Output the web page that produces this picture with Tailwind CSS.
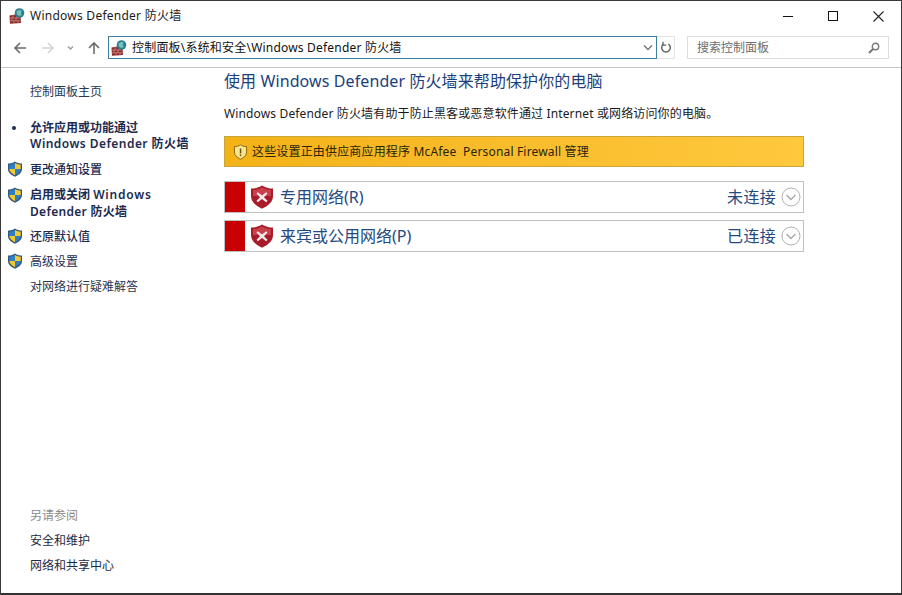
<!DOCTYPE html>
<html lang="zh-CN">
<head>
<meta charset="utf-8">
<script src="https://cdn.jsdelivr.net/npm/@tailwindcss/browser@4"></script>
</head>
<body class="m-0 bg-white">
<svg width="0" height="0" class="absolute">
  <defs>
    <symbol id="fw" viewBox="0 0 16 16">
      <path d="M0.5 7.5 L11.5 5.5 L12 15 L1 15.8 Z" fill="#8e2b2b"/>
      <path d="M1 10 H11.5 M1 12.8 H11.8 M4 7 V10 M8 6.5 V10 M3 10 V12.8 M7 10 V12.8 M5 12.8 V15.5 M9 12.8 V15.5" stroke="#cf9a90" stroke-width=".7" fill="none"/>
      <circle cx="10.5" cy="5" r="4.8" fill="#2f7f90"/>
      <path d="M7.5 3.5 Q10 1 12.8 2.5 Q11 5 12.8 7 Q10 8.8 8 6.5 Z" fill="#72c4bd"/>
    </symbol>
    <symbol id="uac" viewBox="0 0 16 16">
      <path d="M8 .5 C10 2 12.5 2.6 15 2.6 V8 C15 11.5 12 14 8 15.7 C4 14 1 11.5 1 8 V2.6 C3.5 2.6 6 2 8 .5 Z" fill="#33587f"/>
      <path d="M8 2 V8 H2.3 V3.7 C4.3 3.6 6.3 3.1 8 2 Z" fill="#2f7fc4"/>
      <path d="M8 2 C9.7 3.1 11.7 3.6 13.7 3.7 V8 H8 Z" fill="#f4c92f"/>
      <path d="M2.3 8 H8 V14.2 C5 12.8 2.6 10.8 2.3 8 Z" fill="#f4c92f"/>
      <path d="M8 8 H13.7 C13.4 10.8 11 12.8 8 14.2 Z" fill="#2f7fc4"/>
    </symbol>
    <symbol id="red" viewBox="0 0 24 24">
      <path d="M12 .5 C15 2.5 19 3.6 23 3.6 V11 C23 17 18 21 12 23.7 C6 21 1 17 1 11 V3.6 C5 3.6 9 2.5 12 .5 Z" fill="#a81c2a"/>
      <path d="M12 2.5 C15 4.2 18 5 21 5 V11 H3 V5 C6 5 9 4.2 12 2.5 Z" fill="#c8404c"/>
      <path d="M7.8 7.2 L12 10.4 L16.2 7.2 L17.5 8.6 L14 12.2 L17.5 15.8 L16.2 17.2 L12 14 L7.8 17.2 L6.5 15.8 L10 12.2 L6.5 8.6 Z" fill="#f6e9ea"/>
    </symbol>
    <symbol id="chev" viewBox="0 0 20 20">
      <circle cx="10" cy="10" r="9" fill="#fff" stroke="#b3b3b3"/>
      <path d="M5.5 8 L10 12.5 L14.5 8" fill="none" stroke="#a8a8a8" stroke-width="1.4"/>
    </symbol>
  </defs>
</svg>

<div class="w-[902px] h-[595px] overflow-hidden flex flex-col border border-[#3a3a3a] border-b-[2px] border-b-[#333] text-[12px] font-['Noto_Sans','Noto_Sans_CJK_SC',sans-serif] box-border">

  <!-- title bar -->
  <header class="h-[30px] shrink-0 flex items-center">
    <svg class="w-[16px] h-[16px] ml-[8px]"><use href="#fw"/></svg>
    <span class="ml-[5px] text-[#1a1a1a] tracking-[0.25px]">Windows Defender 防火墙</span>
    <div class="ml-auto flex items-center h-full">
      <button class="w-[44px] h-full flex items-center justify-center">
        <svg width="10" height="10" viewBox="0 0 10 10"><path d="M0 5.5H10" stroke="#111" stroke-width="1"/></svg>
      </button>
      <button class="w-[45px] h-full flex items-center justify-center">
        <svg width="10" height="10" viewBox="0 0 10 10"><rect x=".5" y=".5" width="9" height="9" fill="none" stroke="#111"/></svg>
      </button>
      <button class="w-[46px] h-full flex items-center justify-center">
        <svg width="11" height="11" viewBox="0 0 11 11"><path d="M.5 .5L10.5 10.5M10.5 .5L.5 10.5" stroke="#222" stroke-width="1.1"/></svg>
      </button>
    </div>
  </header>

  <!-- navigation row -->
  <nav class="h-[37px] shrink-0 flex items-center border-b border-[#c4c4c4] pb-[3px]">
    <svg class="ml-[12px] w-[14px] h-[14px]" viewBox="0 0 14 14"><path d="M13 7H2M7 2L2 7L7 12" fill="none" stroke="#6b6b6b" stroke-width="1.6"/></svg>
    <svg class="ml-[14px] w-[14px] h-[14px]" viewBox="0 0 14 14"><path d="M1 7H12M7 2L12 7L7 12" fill="none" stroke="#d4d4d4" stroke-width="1.6"/></svg>
    <svg class="ml-[12px] w-[7px] h-[6px]" viewBox="0 0 7 6"><path d="M1 1.5L3.5 4L6 1.5" fill="none" stroke="#9a9a9a" stroke-width="1.3"/></svg>
    <svg class="ml-[13px] w-[14px] h-[14px]" viewBox="0 0 14 14"><path d="M7 13V2M2 7L7 2L12 7" fill="none" stroke="#6b6b6b" stroke-width="1.6"/></svg>
    <div class="ml-[7px] w-[549px] h-[23px] border border-[#3f7f9e] flex items-center">
      <svg class="w-[16px] h-[16px] ml-[2px]"><use href="#fw"/></svg>
      <span class="ml-[5px] text-[#111] tracking-[0.2px]">控制面板\系统和安全\Windows Defender 防火墙</span>
      <svg class="ml-auto mr-[3px] w-[10px] h-[7px]" viewBox="0 0 10 7"><path d="M1 1.5L5 5.5L9 1.5" fill="none" stroke="#777" stroke-width="1.4"/></svg>
    </div>
    <div class="w-[18px] h-[23px] border border-l-0 border-[#e4e4e4] flex items-center justify-center">
      <svg width="12" height="13" viewBox="0 0 12 13"><path d="M8.5 3.2A4.3 4.3 0 1 1 3.5 3.2" fill="none" stroke="#666" stroke-width="1.5"/><path d="M3 .8V4.2H6.2" fill="none" stroke="#666" stroke-width="1.3"/></svg>
    </div>
    <div class="ml-[12px] w-[202px] h-[23px] border border-[#dedede] flex items-center pl-[9px] pr-[8px]">
      <span class="text-[#6d6d6d]">搜索控制面板</span>
      <svg class="ml-auto" width="12" height="12" viewBox="0 0 12 12"><circle cx="7.5" cy="4.5" r="3.2" fill="none" stroke="#777" stroke-width="1.4"/><path d="M5 7L1 11" stroke="#777" stroke-width="2"/></svg>
    </div>
  </nav>

  <div class="flex-1 flex min-h-0">
    <!-- sidebar -->
    <aside class="w-[223px] shrink-0 flex flex-col text-[#1c2b50] pb-[17px]">
      <a class="ml-[29px] mt-[14px] leading-[20px] text-[#2a3650]">控制面板主页</a>
      <div class="mt-[18px] relative pl-[29px] font-semibold leading-[16px]">
        <span class="absolute left-[11px] top-[6px] w-[4px] h-[4px] rounded-full bg-[#1c2b50]"></span>
        允许应用或功能通过<br><span class="tracking-[0.45px]">Windows Defender 防火墙</span>
      </div>
      <div class="mt-[8px] flex items-start h-[20px] leading-[20px]">
        <svg class="w-[16px] h-[16px] ml-[6px] mt-[1px]"><use href="#uac"/></svg>
        <span class="ml-[7px] font-medium">更改通知设置</span>
      </div>
      <div class="mt-[6px] flex items-start leading-[17px]">
        <svg class="w-[16px] h-[16px] ml-[6px] mt-[1px] shrink-0"><use href="#uac"/></svg>
        <span class="ml-[7px] font-semibold">启用或关闭 <span class="tracking-[0.8px]">Windows</span><br><span class="tracking-[0.3px]">Defender 防火墙</span></span>
      </div>
      <div class="mt-[7px] flex items-start h-[20px] leading-[20px]">
        <svg class="w-[16px] h-[16px] ml-[6px] mt-[1px]"><use href="#uac"/></svg>
        <span class="ml-[7px] font-medium">还原默认值</span>
      </div>
      <div class="mt-[5px] flex items-start h-[20px] leading-[20px]">
        <svg class="w-[16px] h-[16px] ml-[6px] mt-[1px]"><use href="#uac"/></svg>
        <span class="ml-[7px]">高级设置</span>
      </div>
      <a class="ml-[29px] mt-[5px] leading-[20px] text-[#2a3650]">对网络进行疑难解答</a>
      <div class="mt-auto ml-[29px] flex flex-col gap-[5px] leading-[20px]">
        <span class="text-[#8a8a8a]">另请参阅</span>
        <a class="text-[#1e2a3e]">安全和维护</a>
        <a class="text-[#1e2a3e]">网络和共享中心</a>
      </div>
    </aside>

    <!-- main -->
    <main class="w-[580px] shrink-0 flex flex-col">
      <h1 class="text-[16px] leading-[24px] mt-[1px] text-[#1c3f7c] font-normal tracking-[0.1px]">使用 Windows Defender 防火墙来帮助保护你的电脑</h1>
      <p class="mt-[11px] leading-[20px] text-[#1a1a1a] tracking-[0.14px]">Windows Defender 防火墙有助于防止黑客或恶意软件通过 Internet 或网络访问你的电脑。</p>
      <div class="mt-[12px] h-[31px] flex items-center border border-[#c9a63c] bg-gradient-to-r from-[#f3b215] to-[#ffc83d] text-[#2a2410]">
        <svg class="ml-[8px]" width="15" height="16" viewBox="0 0 15 16"><path d="M7.5 .8C9 2 11 2.6 13.6 2.6V8C13.6 11 11 13.5 7.5 15.2C4 13.5 1.4 11 1.4 8V2.6C4 2.6 6 2 7.5 .8Z" fill="#fbe48e" stroke="#8a6a10"/><rect x="6.8" y="4.5" width="1.5" height="5" fill="#6a5210"/><rect x="6.8" y="10.5" width="1.5" height="1.6" fill="#6a5210"/></svg>
        <span class="ml-[4px] tracking-[0.17px] whitespace-pre">这些设置正由供应商应用程序 McAfee  Personal Firewall 管理</span>
      </div>
      <div class="mt-[14px] h-[32px] flex items-center border border-[#c0c0c0]">
        <div class="w-[20px] h-full bg-[#c80000] shrink-0"></div>
        <svg class="ml-[5px] w-[24px] h-[24px]"><use href="#red"/></svg>
        <span class="ml-[6px] text-[16px] text-[#23497f]">专用网络(R)</span>
        <span class="ml-auto text-[16px] text-[#23497f] tracking-[0.3px]">未连接</span>
        <svg class="ml-[5px] mr-[2px] w-[20px] h-[20px]"><use href="#chev"/></svg>
      </div>
      <div class="mt-[7px] h-[32px] flex items-center border border-[#c0c0c0]">
        <div class="w-[20px] h-full bg-[#c80000] shrink-0"></div>
        <svg class="ml-[5px] w-[24px] h-[24px]"><use href="#red"/></svg>
        <span class="ml-[6px] text-[16px] text-[#23497f]">来宾或公用网络(P)</span>
        <span class="ml-auto text-[16px] text-[#23497f] tracking-[0.3px]">已连接</span>
        <svg class="ml-[5px] mr-[2px] w-[20px] h-[20px]"><use href="#chev"/></svg>
      </div>
    </main>
  </div>
</div>
</body>
</html>
